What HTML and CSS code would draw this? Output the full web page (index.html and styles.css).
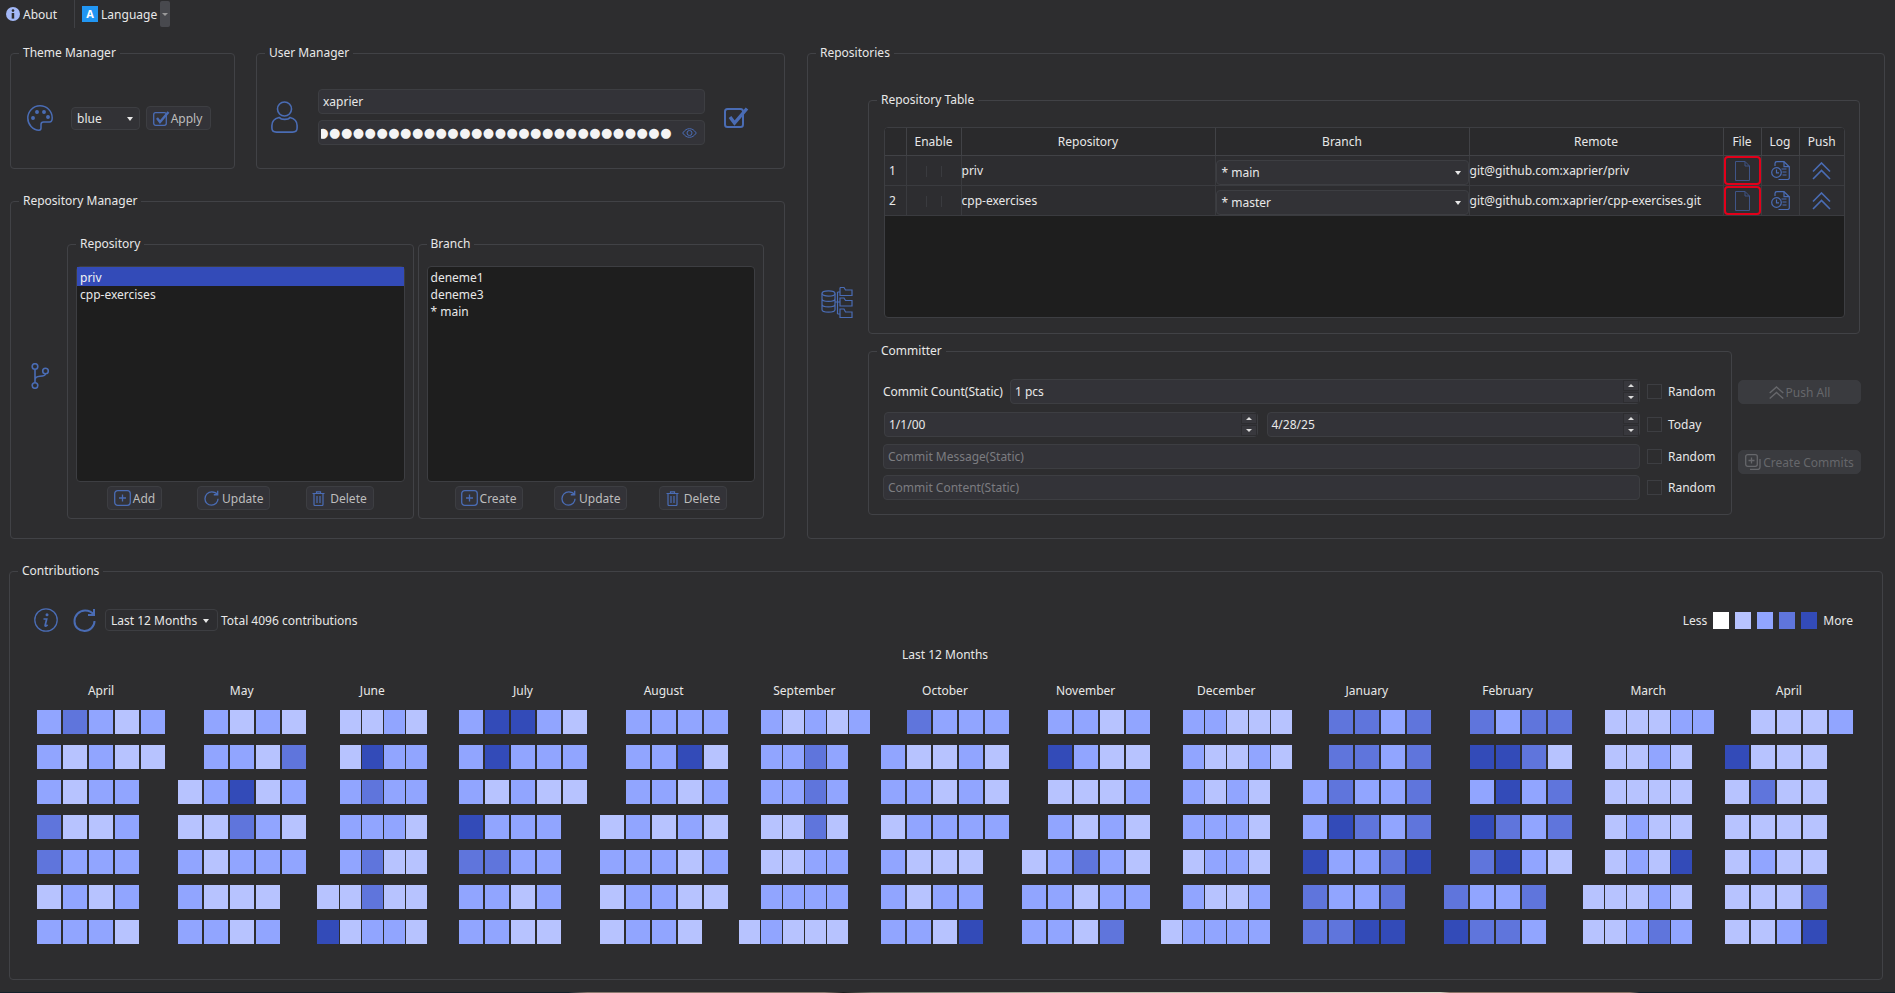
FILE: index.html
```html
<!DOCTYPE html>
<html lang="en">

<head>
   <meta charset="UTF-8">
   <meta name="viewport" content="width=device-width, initial-scale=1.0">
   <title>Git Contribution Manager</title>
   <link rel="stylesheet" href="styles.css">
</head>

<body>
   <header class="toolbar">
      <div class="tool">
         <svg class="about-icon" width="14" height="14" viewBox="0 0 14 14">
            <circle cx="7" cy="7" r="7" fill="#a3b8f7"/>
            <circle cx="7" cy="3.6" r="1.3" fill="#2d2d2f"/>
            <path d="M5.7 6h2.5v5.6h-2.5z" fill="#2d2d2f"/>
         </svg>
         <span>About</span>
      </div>
      <div class="tool-sep"></div>
      <div class="tool tool-lang">
         <span class="lang-icon">A</span>
         <span>Language</span>
         <span class="tool-drop"></span>
      </div>
   </header>

   <main class="top">
      <div class="left-col">
         <div class="left-row">
            <fieldset class="group theme-group">
               <legend>Theme Manager</legend>
               <div class="group-body theme-body">
                  <svg class="icon" width="26" height="26" viewBox="0 0 26 26" fill="none" stroke="currentColor" stroke-width="1.5">
                     <path d="M13 .8C6 .8.8 6.4.8 13c0 6.600 5 12.200 11.200 12.200 1.500 0 2-1 2-2.200v-3.500c0-1.500 1-2.500 2.500-2.500h6c1.700 0 2.700-1.500 2.700-4C25.200 6 19.600.8 13 .8z"/>
                     <circle cx="6" cy="13" r="1.200" fill="currentColor"/>
                     <circle cx="10" cy="7" r="1.200" fill="currentColor"/>
                     <circle cx="17" cy="7" r="1.200" fill="currentColor"/>
                     <circle cx="21" cy="12" r="1.200" fill="currentColor"/>
                  </svg>
                  <div class="combo theme-combo"><span>blue</span><i class="arrow"></i></div>
                  <button class="btn apply-btn">
                     <svg class="icon" width="17" height="15" viewBox="0 0 17 15" fill="none" stroke="currentColor">
                        <rect x=".7" y="1.700" width="12.600" height="12.600" rx="2" stroke-width="1.300"/>
                        <path d="M4 7l3 4 8.500-10" stroke-width="2.400"/>
                     </svg>
                     <span>Apply</span>
                  </button>
               </div>
            </fieldset>

            <fieldset class="group user-group">
               <legend>User Manager</legend>
               <div class="group-body user-body">
                  <svg class="icon" width="27" height="32" viewBox="0 0 27 32" fill="none" stroke="currentColor" stroke-width="1.600">
                     <ellipse cx="13.500" cy="8" rx="7" ry="7"/>
                     <path d="M8 16.500C4 17.500.9 20 .9 24.500V27c0 2.500 2 4.100 4.500 4.100h16.200c2.500 0 4.500-1.600 4.500-4.100v-2.500c0-4.500-3.100-7-7.100-8-1.800 2.500-8.800 2.500-10.500 0z"/>
                  </svg>
                  <div class="user-fields">
                     <div class="input">xaprier</div>
                     <div class="input password">
                        <span class="dots">●●●●●●●●●●●●●●●●●●●●●●●●●●●●●●●●●●●●●●</span>
                        <svg class="icon eye" width="15" height="10" viewBox="0 0 15 10" fill="none" stroke="currentColor">
                           <path d="M.7 5C3 1.800 5 .7 7.500.7S12 1.800 14.300 5C12 8.200 10 9.300 7.500 9.300S3 8.200.7 5z"/>
                           <circle cx="7.500" cy="5" r="2.500"/>
                        </svg>
                     </div>
                  </div>
                  <svg class="icon" width="25" height="21" viewBox="0 0 25 21" fill="none" stroke="currentColor">
                     <rect x="1" y="2" width="18" height="18" rx="2.500" stroke-width="2"/>
                     <path d="M6 10l4.500 6L23 1.500" stroke-width="3.400"/>
                  </svg>
               </div>
            </fieldset>
         </div>

         <fieldset class="group manager-group">
            <legend>Repository Manager</legend>
            <div class="group-body manager-body">
               <svg class="icon branch-icon" width="18" height="26" viewBox="0 0 18 26" fill="none" stroke="currentColor" stroke-width="1.600">
                  <ellipse cx="4" cy="3.500" rx="2.800" ry="2.800"/>
                  <ellipse cx="4" cy="22.500" rx="2.800" ry="2.800"/>
                  <ellipse cx="14.500" cy="8" rx="2.800" ry="2.800"/>
                  <path d="M4 6.300v13.400M4 17c0-3 2-3.500 5-3.700 3.500-.2 5.500-1 5.500-2.600"/>
               </svg>

               <fieldset class="group sub-group">
                  <legend>Repository</legend>
                  <div class="group-body list-body">
                     <ul class="list">
                        <li class="selected">priv</li>
                        <li>cpp-exercises</li>
                     </ul>
                     <div class="list-actions">
                        <button class="btn btn-add"><svg class="icon" width="17" height="16" viewBox="0 0 17 16" fill="none" stroke="currentColor" stroke-width="1.300"><rect x=".7" y=".7" width="15.600" height="14.600" rx="3"/><path d="M8.500 4.500v7M5 8h7"/></svg><span>Add</span></button>
                        <button class="btn btn-update"><svg class="icon" width="15" height="16" viewBox="0 0 23 24" fill="none" stroke="currentColor" stroke-width="2"><path d="M21 7C19 4 15.500 2.500 12 2.500 6 2.500 1.500 7.500 1.500 13.200 1.500 19 6 23 11.500 23c5.500 0 10-4.500 10-10M21 1v6h-6"/></svg><span>Update</span></button>
                        <button class="btn btn-delete"><svg class="icon" width="13" height="15" viewBox="0 0 13 15" fill="none" stroke="currentColor" stroke-width="1.200"><path d="M.5 2.500h12M4.500 2.500V.8h4v1.700M2 2.500v11a1 1 0 0 0 1 1h7a1 1 0 0 0 1-1v-11M5 5v7M8 5v7"/></svg><span>Delete</span></button>
                     </div>
                  </div>
               </fieldset>

               <fieldset class="group sub-group">
                  <legend>Branch</legend>
                  <div class="group-body list-body">
                     <ul class="list">
                        <li>deneme1</li>
                        <li>deneme3</li>
                        <li>* main</li>
                     </ul>
                     <div class="list-actions branch-actions">
                        <button class="btn btn-create"><svg class="icon" width="17" height="16" viewBox="0 0 17 16" fill="none" stroke="currentColor" stroke-width="1.300"><rect x=".7" y=".7" width="15.600" height="14.600" rx="3"/><path d="M8.500 4.500v7M5 8h7"/></svg><span>Create</span></button>
                        <button class="btn btn-update"><svg class="icon" width="15" height="16" viewBox="0 0 23 24" fill="none" stroke="currentColor" stroke-width="2"><path d="M21 7C19 4 15.500 2.500 12 2.500 6 2.500 1.500 7.500 1.500 13.200 1.500 19 6 23 11.500 23c5.500 0 10-4.500 10-10M21 1v6h-6"/></svg><span>Update</span></button>
                        <button class="btn btn-delete"><svg class="icon" width="13" height="15" viewBox="0 0 13 15" fill="none" stroke="currentColor" stroke-width="1.200"><path d="M.5 2.500h12M4.500 2.500V.8h4v1.700M2 2.500v11a1 1 0 0 0 1 1h7a1 1 0 0 0 1-1v-11M5 5v7M8 5v7"/></svg><span>Delete</span></button>
                     </div>
                  </div>
               </fieldset>
            </div>
         </fieldset>
      </div>

      <fieldset class="group repos-group">
         <legend>Repositories</legend>
         <div class="group-body repos-body">
            <svg class="icon repos-icon" width="32" height="32" viewBox="0 0 32 32" fill="none" stroke="currentColor" stroke-width="1.200">
               <ellipse cx="7.500" cy="7.500" rx="6.500" ry="2.600"/>
               <path d="M1 7.500v16c0 1.500 3 2.600 6.500 2.600s6.500-1.100 6.500-2.600v-16M1 12.800c0 1.500 3 2.600 6.500 2.600s6.500-1.100 6.500-2.600M1 18.200c0 1.500 3 2.600 6.500 2.600s6.500-1.100 6.500-2.600"/>
               <path d="M14 16h5M16.500 6v22M16.500 6H19M16.500 28H19"/>
               <path d="M19 2v7.500h12V4h-6.500L23 1.500h-3.500zM19 12v8h12v-5.500h-6.500L23 12zM19 23v8.500h12V26h-6.500L23 23z"/>
            </svg>
            <div class="repos-main">
               <fieldset class="group table-group">
                  <legend>Repository Table</legend>
                  <div class="group-body table-body">
                     <div class="table-wrap">
                        <table class="repo-table">
                           <colgroup>
                              <col class="col-num"><col class="col-enable"><col class="col-wide"><col class="col-wide"><col class="col-wide"><col class="col-file"><col class="col-log"><col>
                           </colgroup>
                           <thead>
                              <tr><th></th><th>Enable</th><th>Repository</th><th>Branch</th><th>Remote</th><th>File</th><th>Log</th><th>Push</th></tr>
                           </thead>
                           <tbody id="repoRows"></tbody>
                        </table>
                     </div>
                  </div>
               </fieldset>

               <div class="commit-row">
                  <fieldset class="group committer-group">
                     <legend>Committer</legend>
                     <div class="group-body committer-body">
                        <div class="form-row form-first">
                           <div class="form-main">
                              <label class="count-label">Commit Count(Static)</label>
                              <div class="input spin"><span>1 pcs</span><span class="spin-btns"><i class="up"></i><i class="down"></i></span></div>
                           </div>
                           <span class="check"></span><span class="check-label">Random</span>
                        </div>
                        <div class="form-row">
                           <div class="form-main date-pair">
                              <div class="input spin"><span>1/1/00</span><span class="spin-btns"><i class="up"></i><i class="down"></i></span></div>
                              <div class="input spin"><span>4/28/25</span><span class="spin-btns"><i class="up"></i><i class="down"></i></span></div>
                           </div>
                           <span class="check"></span><span class="check-label">Today</span>
                        </div>
                        <div class="form-row">
                           <div class="input placeholder">Commit Message(Static)</div>
                           <span class="check"></span><span class="check-label">Random</span>
                        </div>
                        <div class="form-row form-last">
                           <div class="input placeholder">Commit Content(Static)</div>
                           <span class="check"></span><span class="check-label">Random</span>
                        </div>
                     </div>
                  </fieldset>
                  <div class="commit-side">
                     <button class="btn btn-off">
                        <svg width="15" height="13" viewBox="0 0 15 13" fill="none" stroke="currentColor" stroke-width="1.400"><path d="M.7 7L7.500 1l6.800 6M.7 12.500l6.800-6 6.800 6"/></svg>
                        <span>Push All</span>
                     </button>
                     <button class="btn btn-off">
                        <svg width="16" height="16" viewBox="0 0 16 16" fill="none" stroke="currentColor" stroke-width="1.300"><rect x=".7" y=".7" width="11.600" height="11.600" rx="2"/><path d="M6.500 3.500v6M3.500 6.500h6M15 5v8a2.500 2.500 0 0 1-2.500 2.500H5"/></svg>
                        <span>Create Commits</span>
                     </button>
                  </div>
               </div>
            </div>
         </div>
      </fieldset>
   </main>

   <fieldset class="group contrib-group">
      <legend>Contributions</legend>
      <div class="group-body contrib-body">
         <div class="contrib-bar">
            <svg class="icon" width="24" height="24" viewBox="0 0 24 24" fill="none" stroke="currentColor" stroke-width="1.300">
               <circle cx="12" cy="12" r="11.200"/>
               <circle cx="13" cy="6.800" r="1.500" fill="currentColor" stroke="none"/>
               <path d="M9.500 11h3.200l-1.600 6.500c-.2 1 .8 1 2.500-.6" stroke-width="1.700"/>
            </svg>
            <svg class="icon" width="23" height="24" viewBox="0 0 23 24" fill="none" stroke="currentColor" stroke-width="2">
               <path d="M21 7C19 4 15.500 2.500 12 2.500 6 2.500 1.500 7.500 1.500 13.200 1.500 19 6 23 11.500 23c5.500 0 10-4.500 10-10M21 1v6h-6"/>
            </svg>
            <div class="combo range-combo"><span>Last 12 Months</span><i class="arrow"></i></div>
            <span class="total">Total 4096 contributions</span>
            <div class="legend-scale">
               <span>Less</span>
               <i class="swatch l0"></i><i class="swatch l1"></i><i class="swatch l2"></i><i class="swatch l3"></i><i class="swatch l4"></i>
               <span>More</span>
            </div>
         </div>
         <div class="calendar">
            <div class="calendar-title">Last 12 Months</div>
            <div class="months" id="months"></div>
         </div>
      </div>
   </fieldset>

   <div class="wallpaper"></div>

   <script src="app.js"></script>
</body>

</html>
```

FILE: styles.css
```css
html,
body {
   margin: 0;
   height: 100%;
}

body {
   height: 993px;
   overflow: hidden;
   background: #2d2d2f;
   font-family: 'Noto Sans', sans-serif;
   font-size: 12px;
   line-height: 17px;
   color: #e8e8e8;
}

ul {
   list-style: none;
   margin: 0;
   padding: 0;
}

.icon {
   color: #4a6cb4;
   flex: none;
}

/* toolbar */
.toolbar {
   display: flex;
   align-items: center;
   height: 28px;
   padding-left: 6px;
}

.tool {
   display: flex;
   align-items: center;
   gap: 3px;
}

.tool-sep {
   width: 1px;
   height: 28px;
   margin: 0 7px 0 17px;
   background: #404145;
}

.lang-icon {
   display: block;
   width: 16px;
   height: 16px;
   background: #2196f3;
   color: #fff;
   font-weight: 700;
   font-size: 11px;
   line-height: 16px;
   text-align: center;
}

.tool-drop {
   display: block;
   position: relative;
   width: 10px;
   height: 26px;
   background: #48494e;
   border-radius: 2px;
}

.tool-drop::after {
   content: '';
   position: absolute;
   left: 2px;
   top: 12px;
   border: 3px solid transparent;
   border-top: 3px solid #9a9a9a;
}

/* group boxes */
.group {
   display: flex;
   flex-direction: column;
   box-sizing: border-box;
   margin: 0;
   padding: 0;
   min-width: 0;
   border: 1px solid #414246;
   border-radius: 4px;
}

.group legend {
   margin-left: 8px;
   padding: 0 4px 2px;
   line-height: 15px;
}

.group-body {
   flex: 1;
   min-height: 0;
}

.top {
   display: grid;
   grid-template-columns: 775px 1078px;
   column-gap: 22px;
   margin: 17px 0 0 10px;
}

.left-col {
   display: flex;
   flex-direction: column;
   gap: 24px;
}

.left-row {
   display: flex;
   justify-content: space-between;
}

/* theme */
.theme-group {
   width: 225px;
   height: 124px;
}

.theme-body {
   display: flex;
   align-items: center;
   padding: 6px 0 0 16px;
}

.theme-body > .icon {
   margin-right: 18px;
}

.combo {
   display: flex;
   align-items: center;
   justify-content: space-between;
   box-sizing: border-box;
   height: 23px;
   background: #323236;
   border: 1px solid #3d3e42;
   border-radius: 4px;
}

.arrow {
   display: block;
   width: 0;
   height: 0;
   border: 3px solid transparent;
   border-top: 4px solid #e8e8e8;
   margin-top: 4px;
}

.theme-combo {
   width: 69px;
   padding: 0 6px 0 5px;
}

.btn {
   display: inline-flex;
   align-items: center;
   justify-content: center;
   box-sizing: border-box;
   height: 24px;
   padding: 0;
   gap: 2px;
   font: inherit;
   color: #bdbdbd;
   background: #333338;
   border: 1px solid #3d3e42;
   border-radius: 4px;
}

.apply-btn {
   width: 65px;
   margin-left: 6px;
   gap: 1px;
   padding-right: 2px;
}

/* user */
.user-group {
   width: 529px;
   height: 124px;
}

.user-body {
   display: flex;
   align-items: center;
   padding: 4px 0 0 14px;
}

.user-fields {
   display: flex;
   flex-direction: column;
   gap: 6px;
   width: 387px;
   margin: 0 19px 0 20px;
}

.input {
   display: flex;
   align-items: center;
   box-sizing: border-box;
   height: 25px;
   padding: 0 4px;
   background: #333338;
   border: 1px solid #3d3e42;
   border-radius: 4px;
}

.password {
   justify-content: flex-end;
   gap: 10px;
   overflow: hidden;
   padding-left: 2px;
   padding-right: 7px;
}

.dots {
   flex: 1;
   display: flex;
   justify-content: flex-end;
   overflow: hidden;
   white-space: nowrap;
   color: #f4f4f4;
   font-family: 'DejaVu Sans', sans-serif;
   font-size: 13px;
   letter-spacing: .48px;
}

/* repository manager */
.manager-group {
   height: 346px;
}

.manager-body {
   display: flex;
   align-items: flex-start;
   padding: 26px 20px 0 0;
}

.branch-icon {
   margin: 127px 18px 0 20px;
}

.sub-group {
   flex: 1;
   height: 283px;
}

.sub-group + .sub-group {
   margin-left: 4px;
}

.list-body {
   display: flex;
   flex-direction: column;
   gap: 4px;
   padding: 13px 8px 0;
}

.list {
   box-sizing: border-box;
   height: 216px;
   background: #1e1e1e;
   border: 1px solid #3d3e42;
   border-radius: 4px;
}

.list li {
   padding: 0 3px;
   height: 17px;
}

.list li:first-child {
   padding-top: 2px;
}

.list li.selected {
   background: #334bb8;
   color: #f2f2f2;
}

.list-actions {
   display: flex;
   justify-content: space-between;
   padding: 0 31px;
}

.branch-actions {
   padding: 0 28px;
}

.btn-add {
   width: 55px;
}

.btn-update {
   width: 73px;
   gap: 3px;
}

.btn-delete {
   width: 68px;
   gap: 5px;
}

.btn-create {
   width: 68px;
}

/* repositories */
.repos-group {
   height: 494px;
}

.repos-body {
   display: flex;
   padding: 30px 0 0 13px;
}

.repos-icon {
   margin-top: 194px;
}

.repos-main {
   width: 992px;
   margin-left: 15px;
}

.table-group {
   height: 242px;
}

.table-body {
   padding: 18px 14px 0 15px;
}

.table-wrap {
   box-sizing: border-box;
   height: 191px;
   background: #1e1e1e;
   border: 1px solid #3d3e42;
   border-radius: 4px;
   overflow: hidden;
}

.repo-table {
   width: 100%;
   table-layout: fixed;
   border-collapse: collapse;
}

.col-num {
   width: 21px;
}

.col-enable {
   width: 55px;
}

.col-wide {
   width: 254px;
}

.col-file,
.col-log {
   width: 38px;
}

.repo-table th {
   height: 27px;
   padding: 0;
   font-weight: 400;
   background: #2a2a2c;
   border-right: 1px solid #414246;
   border-bottom: 1px solid #414246;
}

.repo-table td {
   height: 29px;
   padding: 0;
   white-space: nowrap;
   background: #2d2d30;
   border: 1px solid #3a3b3f;
   border-width: 0 1px 1px 0;
}

.repo-table th:last-child,
.repo-table td:last-child {
   border-right: 0;
}

.repo-table td.num {
   padding-left: 4px;
}

.enable-box {
   display: block;
   width: 14px;
   height: 11px;
   margin: 2px auto 0;
   border: solid #3a3b3f;
   border-width: 0 1px;
}

.repo-table td.branch {
   height: 26px;
   padding: 3px 0 0;
}

.branch-combo {
   height: 25px;
   padding: 0 7px 0 5px;
}

.repo-table td.action {
   padding: 0;
   text-align: center;
}

.action svg {
   display: block;
   margin: 0 auto;
}

.file-btn {
   display: flex;
   align-items: center;
   justify-content: center;
   box-sizing: border-box;
   height: 29px;
   margin: 0;
   border: 2px solid #e2001a;
   border-radius: 4px;
}

.file-icon {
   color: #3f5588;
}

/* committer */
.commit-row {
   display: flex;
   justify-content: space-between;
   margin: 9px -1px 0 0;
}

.committer-group {
   width: 864px;
   height: 172px;
}

.committer-body {
   display: flex;
   flex-direction: column;
   gap: 7px;
   padding: 19px 14px 0;
}

.form-row {
   display: grid;
   grid-template-columns: 757px 22px 1fr;
   align-items: center;
   height: 25px;
}

.form-first {
   margin-bottom: 1px;
}

.form-last {
   margin-top: -1px;
}

.form-main {
   display: flex;
   align-items: center;
}

.date-pair {
   gap: 9px;
   padding-left: 1px;
}

.date-pair .input {
   flex: 1;
}

.count-label {
   flex: none;
   width: 127px;
}

.spin {
   flex: 1;
   justify-content: space-between;
   padding-right: 0;
}

.spin-btns {
   display: flex;
   flex-direction: column;
   justify-content: space-between;
   height: 23px;
}

.spin-btns i {
   display: flex;
   align-items: center;
   justify-content: center;
   box-sizing: border-box;
   width: 16px;
   height: 11px;
   background: #38383d;
   border: 1px solid #2d2d30;
}

.spin-btns i::before {
   content: '';
   border: 3px solid transparent;
}

.spin-btns .up::before {
   border-top: 0;
   border-bottom: 3px solid #dcdcdc;
}

.spin-btns .down::before {
   border-bottom: 0;
   border-top: 3px solid #dcdcdc;
}

.check {
   display: block;
   box-sizing: border-box;
   width: 15px;
   height: 15px;
   margin-left: 7px;
   border: 1px solid #3d3e42;
}

.check-label {
   padding-left: 6px;
}

.placeholder {
   color: #7c7c80;
}

.commit-side {
   display: flex;
   flex-direction: column;
   gap: 46px;
   width: 123px;
   padding-top: 37px;
}

.btn-off {
   width: 123px;
   height: 24px;
   color: #66676b;
   background: #3a3b3f;
   border-color: #3a3b3f;
   border-radius: 5px;
   white-space: nowrap;
}

/* contributions */
.contrib-group {
   width: 1874px;
   height: 417px;
   margin: 24px 0 0 9px;
}

.contrib-body {
   padding: 28px 29px 0 24px;
}

.contrib-bar {
   display: flex;
   align-items: center;
   height: 24px;
}

.contrib-bar > .icon + .icon {
   margin-left: 15px;
}

.range-combo {
   width: 113px;
   height: 22px;
   margin: 0 3px 0 9px;
   padding: 1px 8px 0 5px;
   background: #2d2d30;
}

.legend-scale {
   display: flex;
   align-items: center;
   margin-left: auto;
}

.swatch {
   display: block;
   width: 16px;
   height: 17px;
   margin-left: 6px;
}

.legend-scale span:last-child {
   margin-left: 6px;
}

.calendar {
   width: 1816px;
   margin: 14px 0 0 3px;
}

.calendar-title {
   text-align: center;
}

/* 13 colunas iguais, um mes por coluna */
.months {
   display: grid;
   grid-template-columns: repeat(13, 128px);
   justify-content: space-between;
   margin-top: 19px;
}

.month-six {
   margin: 0 -1.500px;
}

.month-short {
   width: 110px;
   margin-left: -1px;
}

.month-name {
   margin-bottom: 11px;
   text-align: center;
}

.cells {
   display: grid;
   grid-template-columns: repeat(5, 1fr);
   grid-auto-rows: 24px;
   column-gap: 2px;
   row-gap: 11px;
}

.month-six .cells {
   grid-template-columns: repeat(6, 1fr);
   column-gap: 1px;
}

.month-short .cells {
   column-gap: 1px;
}

.l0 {
   background: #fff;
}

.l1 {
   background: #b7c3ff;
}

.l2 {
   background: #91a5ff;
}

.l3 {
   background: #5f75dc;
}

.l4 {
   background: #334bb8;
}

/* a fresta do papel de parede na ultima linha */
.wallpaper {
   height: 1px;
   margin-top: 12px;
   background: linear-gradient(90deg, #14202a 30%, #8a7a70 31%, #8a7a70 43.500%, #1c1c1c 44.500%, #77776c 46%, #b8b8a8 56%, #d8d8c8 76%, #8a7468 76.500%, #8a7468 86%, #14202a 86.500%);
}
```

FILE: app.js
```js
'use strict';

// Icones das acoes da tabela
const fileIcon = `<svg class="icon file-icon" width="15" height="20" viewBox="0 0 15 20" fill="none" stroke="currentColor"><path d="M.5.5h9.500l4.500 4.500v14.500H.5zM10 .5V5h4.500"/></svg>`;
const logIcon = `<svg class="icon" width="19" height="19" viewBox="0 0 19 19" fill="none" stroke="currentColor" stroke-width="1.200"><path d="M4 5V2.500A1.800 1.800 0 0 1 5.800.7H13l5.300 5v11a1.800 1.800 0 0 1-1.800 1.800H7.500"/><path d="M13 .7v5h5.300M10.500 8h5M11.500 11h4M11.500 14h4"/><circle cx="5.500" cy="11.500" r="4.800"/><path d="M5.500 8.500v3.300H8"/></svg>`;
const pushIcon = `<svg class="icon" width="19" height="18" viewBox="0 0 19 18" fill="none" stroke="currentColor" stroke-width="1.600"><path d="M1 9.500L9.500 1 18 9.500M1 17l8.500-8.500L18 17"/></svg>`;

const repos = [
   { name: 'priv', branch: '* main', remote: 'git@github.com:xaprier/priv' },
   { name: 'cpp-exercises', branch: '* master', remote: 'git@github.com:xaprier/cpp-exercises.git' }
];

const elemRows = document.querySelector('#repoRows');
repos.forEach(function(r, i) {
   elemRows.innerHTML += `
      <tr>
         <td class="num">${i + 1}</td>
         <td><span class="enable-box"></span></td>
         <td>${r.name}</td>
         <td class="branch"><div class="combo branch-combo"><span>${r.branch}</span><i class="arrow"></i></div></td>
         <td>${r.remote}</td>
         <td class="action"><div class="file-btn">${fileIcon}</div></td>
         <td class="action">${logIcon}</td>
         <td class="action">${pushIcon}</td>
      </tr>`;
});

// Cada linha e um dia da semana, cada caractere uma celula ('.' fica vazio)
const months = [
   { name: 'April', rows: ['23212', '21211', '2122.', '3112.', '3222.', '1212.', '2221.'] },
   { name: 'May', rows: ['.2121', '.2213', '12412', '11321', '21222', '2111.', '2212.'] },
   { name: 'June', kind: 'month-short', rows: ['.1121', '.1422', '.2322', '.2221', '.2311', '11311', '41221'] },
   { name: 'July', rows: ['24421', '24222', '21211', '4222.', '3322.', '2212.', '2211.'] },
   { name: 'August', rows: ['.2222', '.2241', '.2212', '12121', '22212', '12211', '1221.'] },
   { name: 'September', kind: 'month-six', rows: ['.21212', '.2232.', '.2232.', '.1131.', '.1122.', '.2222.', '12111.'] },
   { name: 'October', rows: ['.3222', '21121', '22121', '12222', '2111.', '2122.', '2214.'] },
   { name: 'November', rows: ['.2212', '.4211', '.1112', '.2121', '12321', '22122', '2213.'] },
   { name: 'December', kind: 'month-six', rows: ['.22111', '.21121', '.2121.', '.2221.', '.1221.', '.2112.', '12222.'] },
   { name: 'January', rows: ['.3323', '.3323', '23223', '24323', '42234', '3223.', '3344.'] },
   { name: 'February', rows: ['.3233', '.4431', '.2423', '.4323', '.3421', '3223.', '4332.'] },
   { name: 'March', kind: 'month-six', rows: ['.11122', '.1121.', '.1111.', '.1211.', '.1214.', '11121.', '11232.'] },
   { name: 'April', rows: ['.1112', '4111.', '1311.', '1111.', '1211.', '1113.', '1124.'] }
];

const elemMonths = document.querySelector('#months');
for (let m of months) {
   let cells = '';
   for (let row of m.rows) {
      for (let c of row) {
         cells += c == '.' ? '<div></div>' : `<div class="l${c}"></div>`;
      }
   }
   elemMonths.innerHTML += `
      <div class="month ${m.kind || ''}">
         <div class="month-name">${m.name}</div>
         <div class="cells">${cells}</div>
      </div>`;
}
```
